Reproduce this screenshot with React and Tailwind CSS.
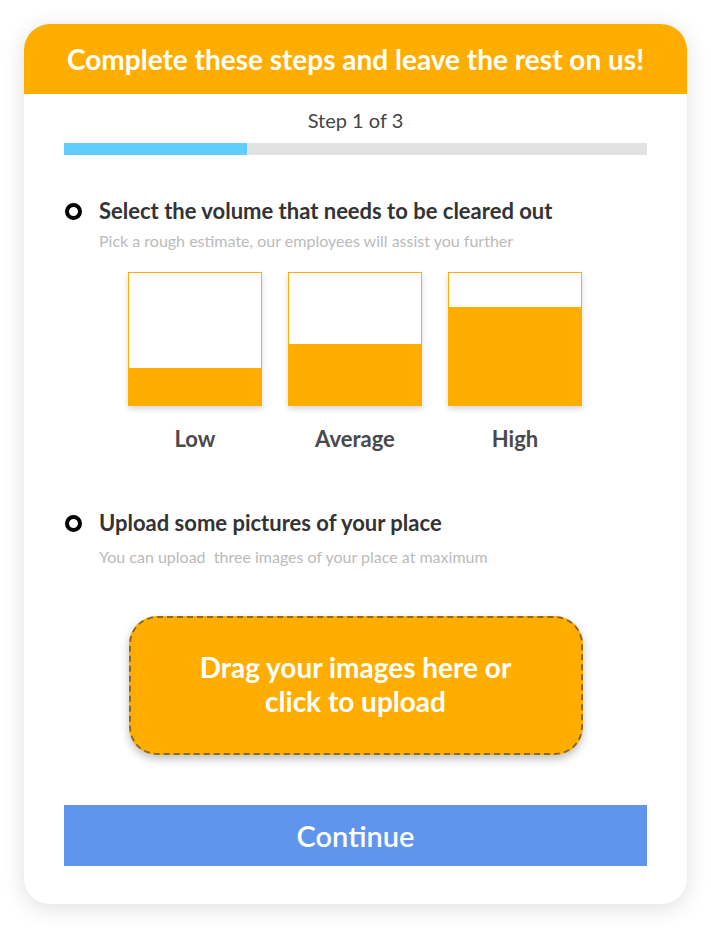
import React from 'react';

const volumes = [
  { label: 'Low', fill: 'h-[37px]' },
  { label: 'Average', fill: 'h-[61px]' },
  { label: 'High', fill: 'h-[98px]' },
];

const Bullet = () => (
  <span className="w-[17px] h-[17px] rounded-full border-[4px] border-black shrink-0" />
);

const StepTitle = ({ title, hint, gap }) => (
  <div>
    <div className="flex items-center gap-[17px] pl-px">
      <Bullet />
      <h3 className="text-[22px] leading-7 font-bold text-[#333]">{title}</h3>
    </div>
    <p className={`${gap} pl-[35px] text-[16px] leading-5 text-[#bbbbbb] whitespace-pre`}>{hint}</p>
  </div>
);

export default function App() {
  return (
    <div className="min-h-[928px] bg-white pt-6 px-6 font-['Lato','Open_Sans',sans-serif]">
      <div className="w-[663px] h-[880px] bg-white rounded-[26px] overflow-hidden shadow-[0_4px_22px_rgba(0,0,0,0.13)]">
        <div className="h-[70px] bg-[#FFAE00] flex items-center justify-center">
          <h1 className="text-[28px] font-bold text-white">
            Complete these steps and leave the rest on us!
          </h1>
        </div>

        <div className="px-10 pt-[14px]">
          <p className="text-center text-[20px] leading-6 text-[#444]">Step 1 of 3</p>
          <div className="mt-[11px] h-3 bg-[#E2E2E2]">
            <div className="h-full w-[183px] bg-[#5FCEFC]" />
          </div>

          <div className="mt-[42px]">
            <StepTitle
              title="Select the volume that needs to be cleared out"
              hint="Pick a rough estimate, our employees will assist you further"
              gap="mt-[6px]"
            />
          </div>

          <div className="mt-[21px] flex justify-center gap-[26px] pr-px">
            {volumes.map((v) => (
              <div key={v.label} className="flex flex-col items-center">
                <div className="w-[134px] h-[134px] border border-[#FFAE00] bg-white flex flex-col justify-end shadow-[0_3px_6px_rgba(0,0,0,0.16)]">
                  <div className={`${v.fill} bg-[#FFAE00]`} />
                </div>
                <span className="mt-[19px] text-[22px] leading-7 font-bold text-[#4a4a4a]">{v.label}</span>
              </div>
            ))}
          </div>

          <div className="mt-[56px]">
            <StepTitle
              title="Upload some pictures of your place"
              hint="You can upload  three images of your place at maximum"
              gap="mt-[10px]"
            />
          </div>

          <div className="mt-[49px] flex justify-center">
            <button className="w-[454px] h-[139px] pb-1 rounded-[28px] bg-[#FFAE00] border-2 border-dashed border-[#8B6A1E] shadow-[0_4px_8px_rgba(0,0,0,0.25)] text-white text-[28px] leading-[34px] font-bold">
              Drag your images here or
              <br />
              click to upload
            </button>
          </div>

          <button className="mt-[50px] w-full h-[61px] bg-[#5F95EA] text-white text-[29px] font-semibold">
            Continue
          </button>
        </div>
      </div>
    </div>
  );
}
